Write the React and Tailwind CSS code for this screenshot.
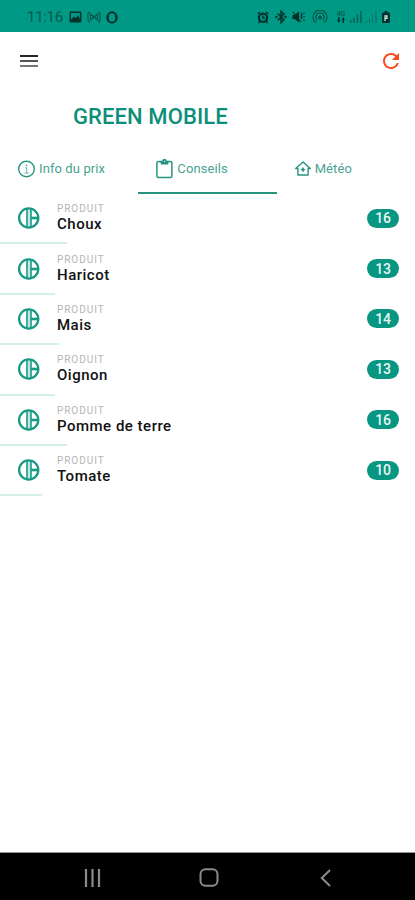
import React from 'react';
import { MdRefresh } from 'react-icons/md';

// Products with their advice count and the width of the progress line
const products = [
  { name: 'Choux', count: 16, progress: 67 },
  { name: 'Haricot', count: 13, progress: 55 },
  { name: 'Mais', count: 14, progress: 59 },
  { name: 'Oignon', count: 13, progress: 55 },
  { name: 'Pomme de terre', count: 16, progress: 67 },
  { name: 'Tomate', count: 10, progress: 42 },
];

const StatusBar = () => (
  <div className="flex h-8 items-center bg-[#009985] pl-[27px] pr-[25px] pt-[2px] text-[#075a4e]">
    <span className="w-[42px] text-[15px] leading-none tracking-[-0.3px]">11:16</span>
    {/* Notification icons */}
    <svg className="h-[12px] w-[13px] text-[#04332d]" viewBox="0 0 12 12" fill="none" stroke="currentColor" strokeWidth="1.5">
      <rect x="0.8" y="1.2" width="10.4" height="9.6" rx="0.5" />
      <path d="M2 9.5l2.4-3 1.8 1.5L8.5 5.5 10.3 9.5z" fill="currentColor" />
    </svg>
    <svg className="ml-[5px] h-[12px] w-[14px]" viewBox="0 0 14 12" fill="none" stroke="currentColor" strokeWidth="1.2">
      <path d="M3 1.2Q1 1.2 1 3v6q0 1.8 2 1.8M11 1.2q2 0 2 1.8v6q0 1.8-2 1.8M3.5 3v6L10.5 3v6z" />
      <circle cx="7" cy="6" r="1" />
    </svg>
    <svg className="ml-[5px] h-[13px] w-[12px] text-[#04332d]" viewBox="0 0 12 13" fill="none" stroke="currentColor">
      <ellipse cx="6" cy="6.5" rx="5" ry="5.4" strokeWidth="1.5" />
      <ellipse cx="6" cy="6.5" rx="4" ry="5" strokeWidth="1.5" />
    </svg>
    <div className="flex-1" />
    {/* Alarm */}
    <svg className="h-[13px] w-[12px] text-[#04332d]" viewBox="0 0 12 13" fill="none" stroke="currentColor" strokeWidth="2.3">
      <circle cx="6" cy="6.7" r="4.1" />
      <path d="M6 4.5v2.5h2M.8 3L3 1M11.2 3L9 1M2.5 10.5L1.5 12M9.5 10.5l1 1.5" strokeWidth="1.4" />
    </svg>
    {/* Bluetooth */}
    <svg className="ml-[6px] h-[14px] w-[12px] text-[#04332d]" viewBox="0 0 12 14" fill="none" stroke="currentColor" strokeWidth="1.5">
      <path d="M2.8 3.8l6.2 6L6 12.8V1.2l3 3-6.2 6" />
      <circle cx="1.5" cy="7" r="0.5" />
      <circle cx="10.5" cy="7" r="0.5" />
    </svg>
    {/* Muted speaker */}
    <svg className="ml-[5px] h-[12px] w-[13px] text-[#04332d]" viewBox="0 0 13 12" fill="currentColor" stroke="currentColor" strokeWidth="1.2">
      <path d="M1 4.5h2l3.5-3v9L3 7.5H1z" />
      <path d="M1 1l8 10M9 2l1 1.5L9 5l1 1.5L9 8M12 1.5V3M12 5v1.5M12 8.5V10" fill="none" />
    </svg>
    {/* Hotspot */}
    <svg className="ml-[7px] h-[14px] w-[16px]" viewBox="0 0 16 14" fill="none" stroke="currentColor" strokeWidth="1.3">
      <path d="M3.5 12.5a7 7 0 1 1 9 0M5.2 10.3a4.2 4.2 0 1 1 5.6 0" />
      <circle cx="8" cy="7.5" r="1.3" fill="currentColor" />
    </svg>
    {/* Mobile data */}
    <div className="ml-[8px] flex w-[10px] flex-col items-center">
      <span className="text-[7px] font-medium leading-[6px]">4G</span>
      <svg className="h-[6px] w-[8px] text-[#04332d]" viewBox="0 0 8 6" fill="currentColor">
        <path d="M1 0h1.500v3h1L1.750 6 0 3h1zM5.500 6V3h-1l1.750-3L8 3H7v3z" />
      </svg>
    </div>
    <svg className="ml-[4px] h-[12px] w-[12px] opacity-80" viewBox="0 0 12 12" fill="currentColor">
      <path d="M0 9h1.500v3H0zM3.300 6.500h1.500V12H3.300zM6.600 3.500h1.700V12H6.600zM10 0h1.700v12H10z" />
    </svg>
    <svg className="ml-[4px] h-[12px] w-[11px] opacity-60" viewBox="0 0 11 12" fill="currentColor">
      <path d="M0 10h1v2H0zM3 7.500h1V12H3zM6 4h1v8H6zM9.500 0h1v12h-1z" />
    </svg>
    <svg className="ml-[5px] h-[12px] w-[8px] text-[#04332d]" viewBox="0 0 8 12">
      <path d="M2.500 0h3v1.500H7A1 1 0 0 1 8 2.500V11a1 1 0 0 1-1 1H1a1 1 0 0 1-1-1V2.500a1 1 0 0 1 1-1h1.500z" fill="currentColor" />
      <path d="M3 10V4.800h2v2.500H3" fill="none" stroke="#d5eee9" strokeWidth="1.200" />
    </svg>
  </div>
);

const InfoIcon = () => (
  <svg className="h-[18px] w-[17px]" viewBox="0 0 17 18" fill="none" stroke="currentColor" strokeWidth="1.4">
    <circle cx="8.500" cy="9" r="7.800" />
    <path d="M7 7.800h1.700V13M6.500 13h4.300" strokeWidth="0.9" opacity="0.75" />
    <circle cx="8.500" cy="5.300" r="0.6" fill="currentColor" strokeWidth="0.4" />
  </svg>
);

const ClipboardIcon = () => (
  <svg className="h-[20px] w-[17px]" viewBox="0 0 17 20" fill="none" stroke="currentColor" strokeWidth="1.5">
    <rect x="0.9" y="2.5" width="15" height="16" rx="1.5" />
    <path d="M4 2h2.300a2.200 2.200 0 0 1 4.400 0H13L12 5.500H5z" fill="currentColor" stroke="none" />
    <circle cx="8.500" cy="2.300" r="0.6" fill="#ffffff" stroke="none" />
  </svg>
);

const HomeIcon = () => (
  <svg className="h-[15px] w-[16px]" viewBox="0 0 16 15" fill="none" stroke="currentColor" strokeWidth="1.4">
    <path d="M.7 7.500L8 1l7.300 6.500h-2.200V14H2.900V7.500z" strokeLinejoin="round" />
    <path d="M8 5.800l1 1.900 1.700.9-1.700.9-1 1.900-1-1.900-1.700-.9 1.700-.9z" fill="currentColor" stroke="none" />
  </svg>
);

// Circle split into one half and two quarters
const PieIcon = () => (
  <svg className="h-6 w-6 shrink-0 text-[#159a83]" viewBox="0 0 24 24" fill="none" stroke="currentColor" strokeWidth="2.3">
    <circle cx="11.700" cy="12" r="9.600" />
    <path d="M10 2.500v19M14 2.500v19" strokeWidth="1.6" />
    <path d="M12 2.500v19" strokeWidth="2.400" opacity="0.25" />
    <path d="M14 12h7" strokeWidth="2.600" />
  </svg>
);

const tabs = [
  { label: 'Info du prix', icon: <InfoIcon />, active: false },
  { label: 'Conseils', icon: <ClipboardIcon />, active: true },
  { label: 'Météo', icon: <HomeIcon />, active: false },
];

const ProductRow = ({ product }) => (
  <div className="flex h-[50.4px] flex-col">
    <div className="flex flex-1 items-center pl-[17px] pr-[16px]">
      <PieIcon />
      <div className="ml-[16px] flex flex-1 flex-col">
        <span className="text-[10px] leading-[13px] tracking-[0.95px] text-[#b5b5b5]">PRODUIT</span>
        <span className="text-[15px] font-medium leading-[19px] tracking-[0.5px] text-[#111111]">{product.name}</span>
      </div>
      <span className="flex h-[19px] w-8 items-center justify-center rounded-full bg-[#079681] text-[14px] font-medium leading-none tracking-[-0.2px] text-[#e8f7f4]">
        {product.count}
      </span>
    </div>
    <div className="h-[2px] bg-[#d3f1e8]" style={{ width: product.progress }} />
  </div>
);

const App = () => {
  return (
    <div className="flex h-[900px] w-[415px] flex-col overflow-hidden bg-white font-['Roboto',sans-serif]">
      <StatusBar />

      {/* Toolbar */}
      <div className="flex h-[58px] items-center justify-between pl-5 pr-[12px]">
        <div className="flex flex-col gap-[3px]">
          <div className="h-[2px] w-[18px] bg-[#262626]" />
          <div className="h-[2px] w-[18px] bg-[#555555]" />
          <div className="h-[2px] w-[18px] bg-[#777777]" />
        </div>
        <MdRefresh className="h-6 w-6 text-[#f94b1c]" />
      </div>

      <h1 className="mt-[13px] pl-[73px] text-[22px] font-medium leading-[28px] tracking-[0.1px] text-[#0c8f7a]">GREEN MOBILE</h1>

      {/* Tabs */}
      <div className="mt-[14px] flex h-[49px]">
        {tabs.map((tab) => (
          <div
            key={tab.label}
            className={`flex flex-1 items-center gap-[4px] border-b-2 pl-[18px] text-[13px] text-[#27947f] ${
              tab.active ? 'border-[#27947f]' : 'border-transparent'
            }`}
          >
            {tab.icon}
            <span className="tracking-[0.1px] text-[#4aa393]">{tab.label}</span>
          </div>
        ))}
      </div>

      {/* Product list */}
      <div className="flex flex-1 flex-col">
        {products.map((product) => (
          <ProductRow key={product.name} product={product} />
        ))}
      </div>

      {/* Android navigation */}
      <div className="flex h-[48px] items-center border-t border-[#999999] bg-black pl-[84px] pt-[2px] text-[#8b8b8b]">
        <svg className="h-[18px] w-[17px]" viewBox="0 0 17 18" fill="none" stroke="currentColor" strokeWidth="2.2">
          <path d="M2 0v18M8.500 0v18M15 0v18" />
        </svg>
        <svg className="ml-[98px] h-[19px] w-[20px]" viewBox="0 0 20 19" fill="none" stroke="currentColor" strokeWidth="2">
          <rect x="1.500" y="1.300" width="17" height="16.400" rx="5" />
        </svg>
        <svg className="ml-[101px] h-[18px] w-[11px]" viewBox="0 0 11 18" fill="none" stroke="currentColor" strokeWidth="2">
          <path d="M10 1L1.800 9l8.200 8" />
        </svg>
      </div>
    </div>
  );
};

export default App;
